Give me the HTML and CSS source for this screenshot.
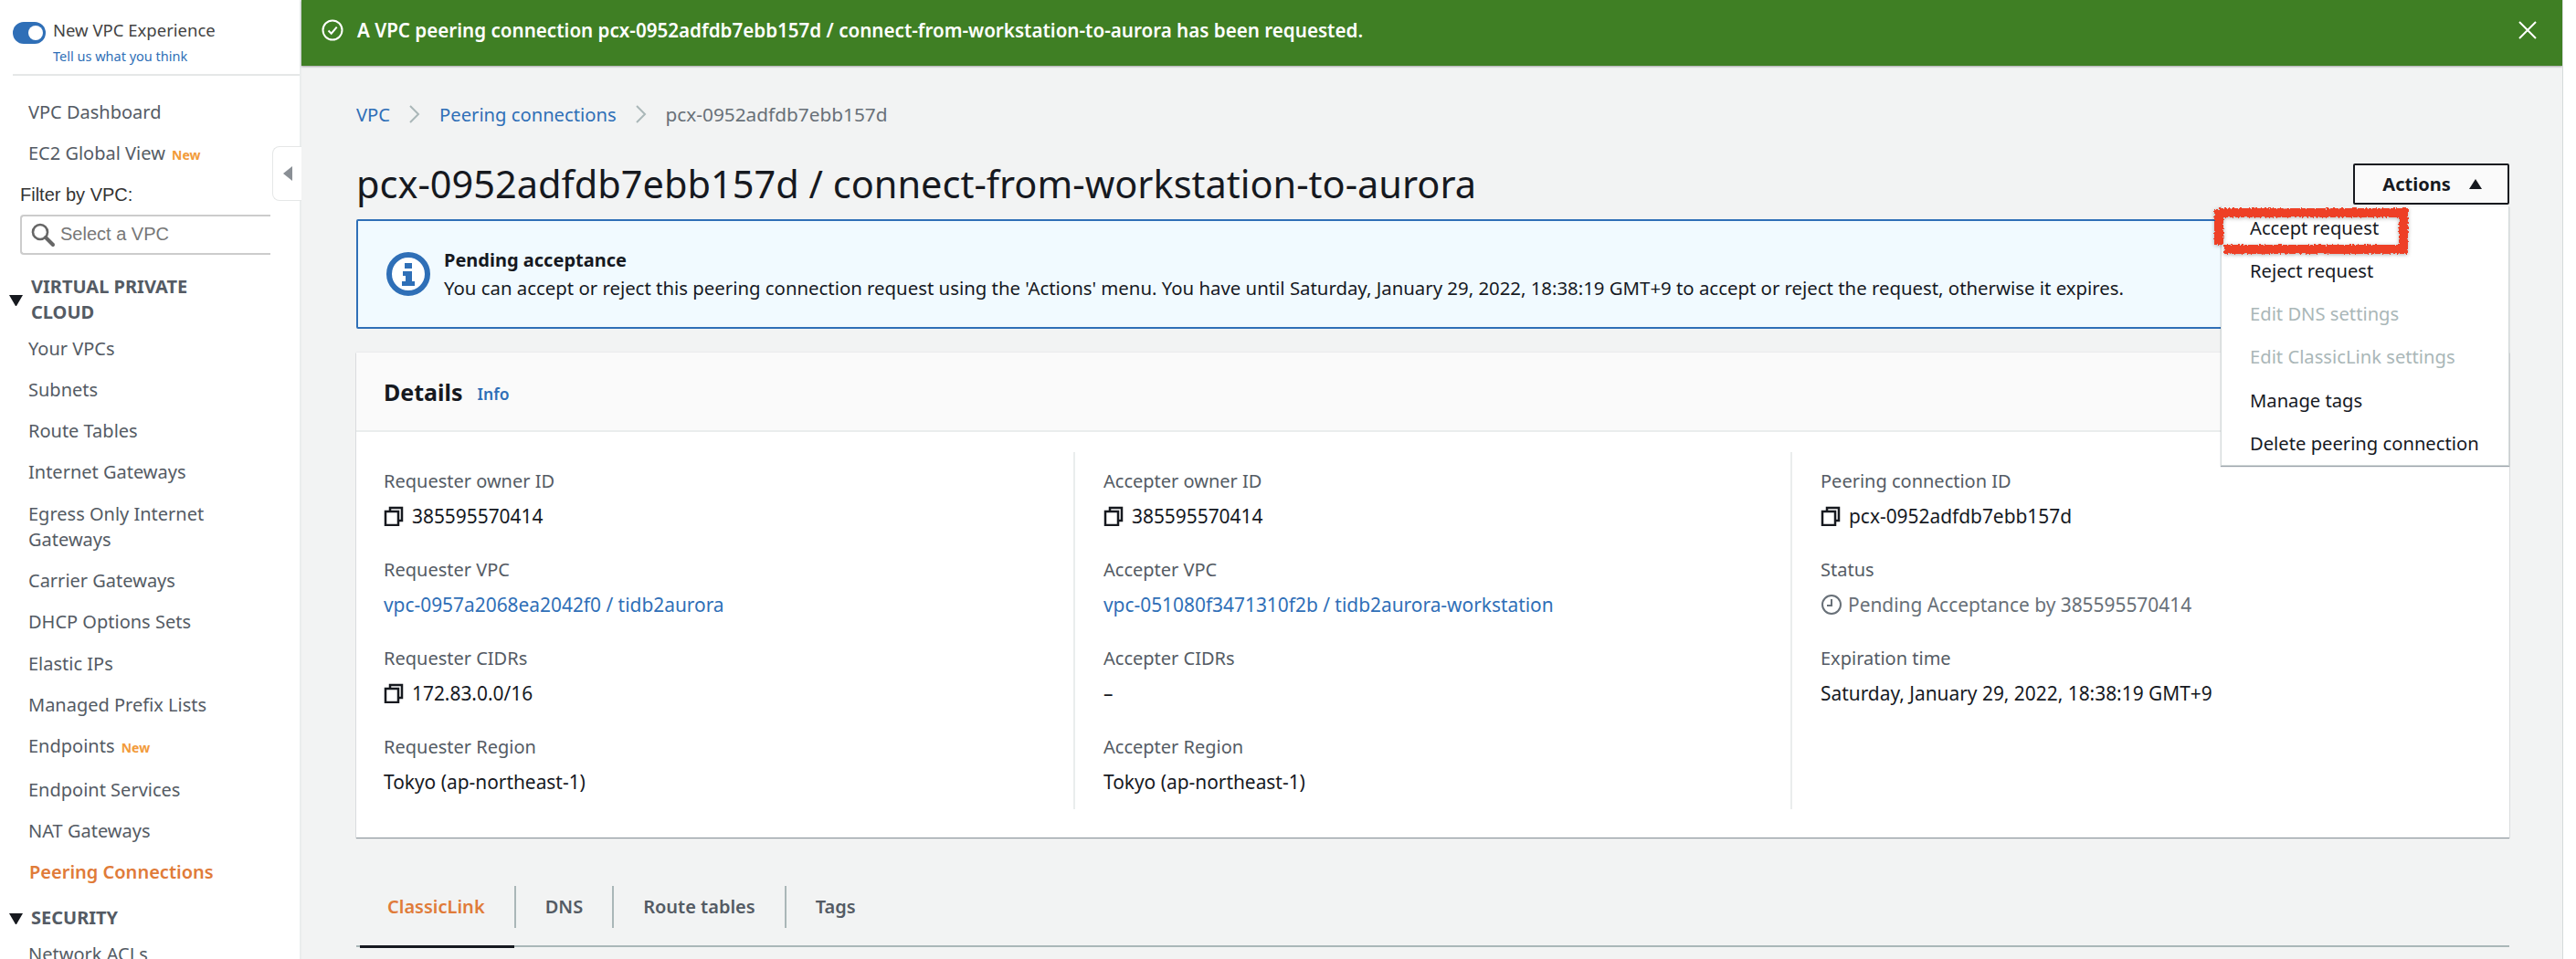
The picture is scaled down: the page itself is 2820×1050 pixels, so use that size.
FILE: index.html
```html
<!DOCTYPE html>
<html lang="en">
<head>
  <meta charset="UTF-8">
  <title>Peering connection</title>
  <link rel="stylesheet" href="styles.css">
</head>
<body>
  <div class="app">
    <!-- Sidebar -->
    <aside class="sidebar">
      <div class="experience">
        <span class="toggle"><span class="toggle-knob"></span></span>
        <div>
          <div class="experience-title">New VPC Experience</div>
          <a class="experience-link">Tell us what you think</a>
        </div>
      </div>

      <ul class="nav nav-top">
        <li>VPC Dashboard</li>
        <li>EC2 Global View <span class="new">New</span></li>
      </ul>

      <label class="filter-label">Filter by VPC:</label>
      <div class="filter-input">
        <svg class="search-icon" width="28" height="28" viewBox="0 0 28 28">
          <circle cx="11" cy="11" r="8" fill="none" stroke="#666" stroke-width="2.6"/>
          <path d="M17 17l8 8" stroke="#666" stroke-width="4" stroke-linecap="round"/>
        </svg>
        <span>Select a VPC</span>
      </div>

      <h4 class="nav-heading nav-heading-vpc"><span class="caret"></span><span>VIRTUAL PRIVATE CLOUD</span></h4>
      <ul class="nav">
        <li>Your VPCs</li>
        <li>Subnets</li>
        <li>Route Tables</li>
        <li>Internet Gateways</li>
        <li>Egress Only Internet Gateways</li>
        <li>Carrier Gateways</li>
        <li>DHCP Options Sets</li>
        <li>Elastic IPs</li>
        <li>Managed Prefix Lists</li>
        <li>Endpoints <span class="new">New</span></li>
        <li>Endpoint Services</li>
        <li>NAT Gateways</li>
        <li class="active">Peering Connections</li>
      </ul>

      <h4 class="nav-heading nav-heading-security"><span class="caret"></span><span>SECURITY</span></h4>
      <ul class="nav">
        <li>Network ACLs</li>
      </ul>
    </aside>

    <button class="collapse" type="button"><span class="collapse-arrow"></span></button>

    <!-- Contenido -->
    <main class="main">
      <div class="flash">
        <svg class="flash-icon" width="24" height="24" viewBox="0 0 24 24" fill="none" stroke="#fff" stroke-width="2">
          <circle cx="12" cy="12" r="10.5"/>
          <path d="M7.5 12.5l3.2 3.2 6-7"/>
        </svg>
        <span class="flash-text">A VPC peering connection pcx-0952adfdb7ebb157d / connect-from-workstation-to-aurora has been requested.</span>
        <svg class="flash-close" width="20" height="20" viewBox="0 0 20 20" stroke="#fff" stroke-width="2">
          <path d="M1 1l18 18M19 1L1 19"/>
        </svg>
      </div>

      <div class="content">
        <nav class="breadcrumb">
          <a>VPC</a>
          <svg width="14" height="22" viewBox="0 0 14 22" fill="none" stroke="#aab7b8" stroke-width="2"><path d="M2 2l9 9-9 9"/></svg>
          <a>Peering connections</a>
          <svg width="14" height="22" viewBox="0 0 14 22" fill="none" stroke="#aab7b8" stroke-width="2"><path d="M2 2l9 9-9 9"/></svg>
          <span>pcx-0952adfdb7ebb157d</span>
        </nav>

        <div class="page-header">
          <h1>pcx-0952adfdb7ebb157d / connect-from-workstation-to-aurora</h1>
          <div class="actions">
            <button class="actions-btn" type="button">Actions <span class="caret-up"></span></button>
            <ul class="menu">
              <li>Accept request</li>
              <li>Reject request</li>
              <li class="disabled">Edit DNS settings</li>
              <li class="disabled">Edit ClassicLink settings</li>
              <li>Manage tags</li>
              <li>Delete peering connection</li>
            </ul>
            <svg class="highlight" width="230" height="70" viewBox="0 0 230 70">
              <defs>
                <filter id="rough" x="-10%" y="-20%" width="120%" height="140%">
                  <feTurbulence type="fractalNoise" baseFrequency="0.5" numOctaves="2" seed="4"/>
                  <feDisplacementMap in="SourceGraphic" scale="5"/>
                </filter>
              </defs>
              <path d="M7 12H209V52H13M7 8V47" fill="none" stroke="#ee4026" stroke-width="10" filter="url(#rough)"/>
            </svg>
          </div>
        </div>

        <div class="alert">
          <svg class="alert-icon" width="48" height="48" viewBox="0 0 48 48">
            <circle cx="24" cy="24" r="21" fill="#fff" stroke="#2f6fb7" stroke-width="6"/>
            <rect x="20" y="12" width="8" height="6" fill="#2f6fb7"/>
            <path d="M18 21h10v11h3v5H17v-5h4v-6h-3z" fill="#2f6fb7"/>
          </svg>
          <div>
            <div class="alert-title">Pending acceptance</div>
            <div class="alert-text">You can accept or reject this peering connection request using the 'Actions' menu. You have until Saturday, January 29, 2022, 18:38:19 GMT+9 to accept or reject the request, otherwise it expires.</div>
          </div>
        </div>

        <section class="card">
          <header class="card-header">
            <h2>Details</h2>
            <a class="info">Info</a>
          </header>
          <div class="card-body">
            <div class="col">
              <div class="field">
                <div class="field-label">Requester owner ID</div>
                <div class="field-value"><svg class="copy" width="22" height="22" viewBox="0 0 22 22" fill="none" stroke="#16191f" stroke-width="2.5"><path d="M7 5V2h13v14h-3"/><rect x="2" y="6" width="14" height="15"/></svg>385595570414</div>
              </div>
              <div class="field">
                <div class="field-label">Requester VPC</div>
                <div class="field-value"><a>vpc-0957a2068ea2042f0 / tidb2aurora</a></div>
              </div>
              <div class="field">
                <div class="field-label">Requester CIDRs</div>
                <div class="field-value"><svg class="copy" width="22" height="22" viewBox="0 0 22 22" fill="none" stroke="#16191f" stroke-width="2.5"><path d="M7 5V2h13v14h-3"/><rect x="2" y="6" width="14" height="15"/></svg>172.83.0.0/16</div>
              </div>
              <div class="field">
                <div class="field-label">Requester Region</div>
                <div class="field-value">Tokyo (ap-northeast-1)</div>
              </div>
            </div>
            <div class="col">
              <div class="field">
                <div class="field-label">Accepter owner ID</div>
                <div class="field-value"><svg class="copy" width="22" height="22" viewBox="0 0 22 22" fill="none" stroke="#16191f" stroke-width="2.5"><path d="M7 5V2h13v14h-3"/><rect x="2" y="6" width="14" height="15"/></svg>385595570414</div>
              </div>
              <div class="field">
                <div class="field-label">Accepter VPC</div>
                <div class="field-value"><a>vpc-051080f3471310f2b / tidb2aurora-workstation</a></div>
              </div>
              <div class="field">
                <div class="field-label">Accepter CIDRs</div>
                <div class="field-value">–</div>
              </div>
              <div class="field">
                <div class="field-label">Accepter Region</div>
                <div class="field-value">Tokyo (ap-northeast-1)</div>
              </div>
            </div>
            <div class="col">
              <div class="field">
                <div class="field-label">Peering connection ID</div>
                <div class="field-value"><svg class="copy" width="22" height="22" viewBox="0 0 22 22" fill="none" stroke="#16191f" stroke-width="2.5"><path d="M7 5V2h13v14h-3"/><rect x="2" y="6" width="14" height="15"/></svg>pcx-0952adfdb7ebb157d</div>
              </div>
              <div class="field">
                <div class="field-label">Status</div>
                <div class="field-value status"><svg class="clock" width="24" height="24" viewBox="0 0 24 24" fill="none" stroke="#687078" stroke-width="2"><circle cx="12" cy="12" r="10"/><path d="M12 6v7H7"/></svg>Pending Acceptance by 385595570414</div>
              </div>
              <div class="field">
                <div class="field-label">Expiration time</div>
                <div class="field-value">Saturday, January 29, 2022, 18:38:19 GMT+9</div>
              </div>
            </div>
          </div>
        </section>

        <div class="tabs">
          <a class="tab tab-active">ClassicLink</a>
          <a class="tab">DNS</a>
          <a class="tab">Route tables</a>
          <a class="tab">Tags</a>
        </div>
      </div>
    </main>
  </div>
</body>
</html>
```

FILE: styles.css
```css
* {
  box-sizing: border-box;
}

html, body {
  margin: 0;
  padding: 0;
  height: 1050px;
  overflow: hidden;
  background: #fff;
}

body {
  font-family: "Noto Sans", sans-serif;
  font-size: 20px;
  color: #16191f;
}

a {
  color: #2f6fb7;
}

ul {
  list-style: none;
  margin: 0;
  padding: 0;
}

.app {
  position: relative;
  display: flex;
  width: 2806px;
  height: 1050px;
  overflow: hidden;
  background: #f2f3f3;
  border-right: 1px solid #d5dbdb;
}

/* Sidebar */
.sidebar {
  flex: 0 0 328px;
  height: 1050px;
  overflow: hidden;
  background: #fff;
  color: #545b64;
}

.experience {
  display: flex;
  gap: 8px;
  height: 83px;
  margin-left: 14px;
  padding-top: 20px;
  border-bottom: 2px solid #e5e7e7;
}

.toggle {
  display: block;
  position: relative;
  width: 36px;
  height: 24px;
  margin-top: 4px;
  border-radius: 12px;
  background: #2f6fb7;
}

.toggle-knob {
  position: absolute;
  top: 4px;
  right: 3px;
  width: 16px;
  height: 16px;
  border-radius: 50%;
  background: #fff;
}

.experience-title {
  font-size: 18.5px;
  line-height: 26px;
  color: #444;
}

.experience-link {
  display: block;
  margin-top: 5px;
  font-size: 14.5px;
  line-height: 20px;
}

.nav li {
  padding-left: 31px;
  padding-right: 20px;
  margin-bottom: 17.3px;
  line-height: 28px;
}

.nav .active {
  padding-left: 32px;
  color: #e07b39;
  font-weight: 600;
}

.nav-top {
  margin-top: 26px;
}

.new {
  margin-left: 2px;
  font-size: 14px;
  font-weight: 700;
  color: #f29b3a;
}

.filter-label {
  display: block;
  margin-top: -2px;
  margin-left: 22px;
  font-family: "Liberation Sans", sans-serif;
  line-height: 26px;
  color: #333;
}

.filter-input {
  display: flex;
  align-items: center;
  gap: 5px;
  width: 274px;
  height: 44px;
  margin: 9px 0 0 22px;
  padding-left: 9px;
  border: 2px solid #ccc;
  border-right: none;
  border-radius: 4px 0 0 4px;
  font-family: "Liberation Sans", sans-serif;
  color: #777;
}

.nav-heading {
  display: flex;
  align-items: center;
  gap: 9px;
  margin: 0;
  padding-left: 10px;
  width: 240px;
  font-size: 20px;
  font-weight: 700;
  line-height: 28px;
}

.nav-heading-vpc {
  margin-top: 21px;
  margin-bottom: 12px;
}

.nav-heading-security {
  margin-top: 22px;
  margin-bottom: 12px;
}

.caret {
  flex: 0 0 15px;
  width: 0;
  height: 0;
  margin-top: 2px;
  border-left: 7.5px solid transparent;
  border-right: 7.5px solid transparent;
  border-top: 12px solid #16191f;
}

.collapse {
  position: absolute;
  top: 160px;
  left: 298px;
  z-index: 2;
  width: 32px;
  height: 60px;
  padding: 0;
  background: #fff;
  border: 1px solid #e5e7e7;
  border-right: none;
  border-radius: 8px 0 0 8px;
}

.collapse-arrow {
  display: block;
  width: 0;
  height: 0;
  margin-left: 11px;
  border-top: 8px solid transparent;
  border-bottom: 8px solid transparent;
  border-right: 10px solid #8a8f95;
}

/* Main */
.main {
  flex: 1;
  min-width: 0;
  border-left: 2px solid #eaeded;
}

.flash {
  display: flex;
  align-items: center;
  height: 72px;
  padding: 0 28px 6px 22px;
  background: #3f7f24;
  box-shadow: 0 1px 2px rgba(0, 0, 0, 0.35);
  color: #fff;
  font-size: 20.6px;
  font-weight: 600;
}

.flash-text {
  flex: 1;
  margin-left: 15px;
}

.content {
  padding: 0 58px 0 60px;
}

.breadcrumb {
  display: flex;
  align-items: center;
  gap: 20px;
  height: 28px;
  margin-top: 39px;
}

.breadcrumb a {
  font-size: 20.2px;
}

.breadcrumb span {
  font-size: 20.8px;
  color: #687078;
}

.page-header {
  display: flex;
  align-items: center;
  justify-content: space-between;
  height: 46px;
  margin-top: 39px;
}

h1 {
  margin: 0;
  font-size: 41.5px;
  font-weight: 400;
  line-height: 46px;
}

.actions {
  position: relative;
}

.actions-btn {
  display: flex;
  align-items: center;
  justify-content: center;
  gap: 20px;
  width: 171px;
  height: 45px;
  padding-left: 8px;
  background: #fafafa;
  border: 2px solid #16191f;
  border-radius: 2px;
  font-family: inherit;
  font-size: 20px;
  font-weight: 700;
  color: #16191f;
}

.caret-up {
  width: 0;
  height: 0;
  border-left: 7.5px solid transparent;
  border-right: 7.5px solid transparent;
  border-bottom: 11px solid #16191f;
}

.menu {
  position: absolute;
  top: 47px;
  right: 0;
  z-index: 3;
  width: 316px;
  padding: 0;
  background: #fff;
  border: 1px solid #d5dbdb;
  border-top: none;
  box-shadow: 0 1px 1px rgba(0, 22, 41, 0.4);
}

.menu li {
  height: 47.3px;
  padding-left: 31px;
  font-size: 20.2px;
  line-height: 47.3px;
  white-space: nowrap;
}

.menu .disabled {
  color: #aab7b8;
}

.highlight {
  position: absolute;
  top: 42px;
  left: -154px;
  z-index: 4;
  filter: drop-shadow(0 1px 2px rgba(0, 0, 0, 0.3));
}

.alert {
  display: flex;
  align-items: center;
  gap: 15px;
  height: 120px;
  margin-top: 16px;
  padding-left: 31px;
  background: #f1faff;
  border: 2px solid #2f6fb7;
  border-radius: 2px;
}

.alert-title {
  font-weight: 700;
  line-height: 30px;
}

.alert-text {
  font-size: 20.36px;
  line-height: 30px;
}

.card {
  height: 531px;
  margin-top: 26px;
  background: #fff;
  box-shadow: 0 1px 1px rgba(0, 22, 41, 0.4), 0 0 1px rgba(0, 22, 41, 0.2);
}

.card-header {
  display: flex;
  align-items: center;
  gap: 14px;
  height: 87px;
  padding-left: 30px;
  background: #fafafa;
  border-bottom: 2px solid #eaeded;
}

.card-header h2 {
  margin: 0;
  font-size: 25px;
  font-weight: 700;
}

.info {
  margin-top: 4px;
  margin-left: 2px;
  font-size: 17.5px;
  font-weight: 600;
}

.card-body {
  display: grid;
  grid-template-columns: 755px 785px 1fr;
  margin: 22px 30px 0;
}

.col {
  height: 391px;
  padding-left: 31px;
  padding-top: 18px;
  border-left: 2px solid #eaeded;
}

.col:first-child {
  padding-left: 0;
  border-left: none;
}

.field {
  height: 66px;
  margin-bottom: 31px;
}

.field-label {
  line-height: 28px;
  color: #545b64;
}

.field-value {
  display: flex;
  align-items: center;
  margin-top: 10px;
  font-size: 20.9px;
  line-height: 28px;
}

.field-value.status {
  color: #687078;
}

.copy {
  margin-right: 9px;
}

.clock {
  margin-right: 6px;
}

.tabs {
  display: flex;
  height: 90px;
  margin-top: 30px;
  padding-top: 23px;
  border-bottom: 2px solid #aab7b8;
  font-weight: 600;
}

.tab {
  height: 46px;
  padding: 0 32px;
  border-left: 2px solid #aab7b8;
  color: #545b64;
  line-height: 46px;
}

.tab:first-child {
  padding-left: 34px;
  border-left: none;
}

.tab-active {
  position: relative;
  color: #e07b39;
}

.tab-active::after {
  content: "";
  position: absolute;
  left: 4px;
  right: 0;
  top: 65px;
  height: 3px;
  background: #16191f;
}
```
